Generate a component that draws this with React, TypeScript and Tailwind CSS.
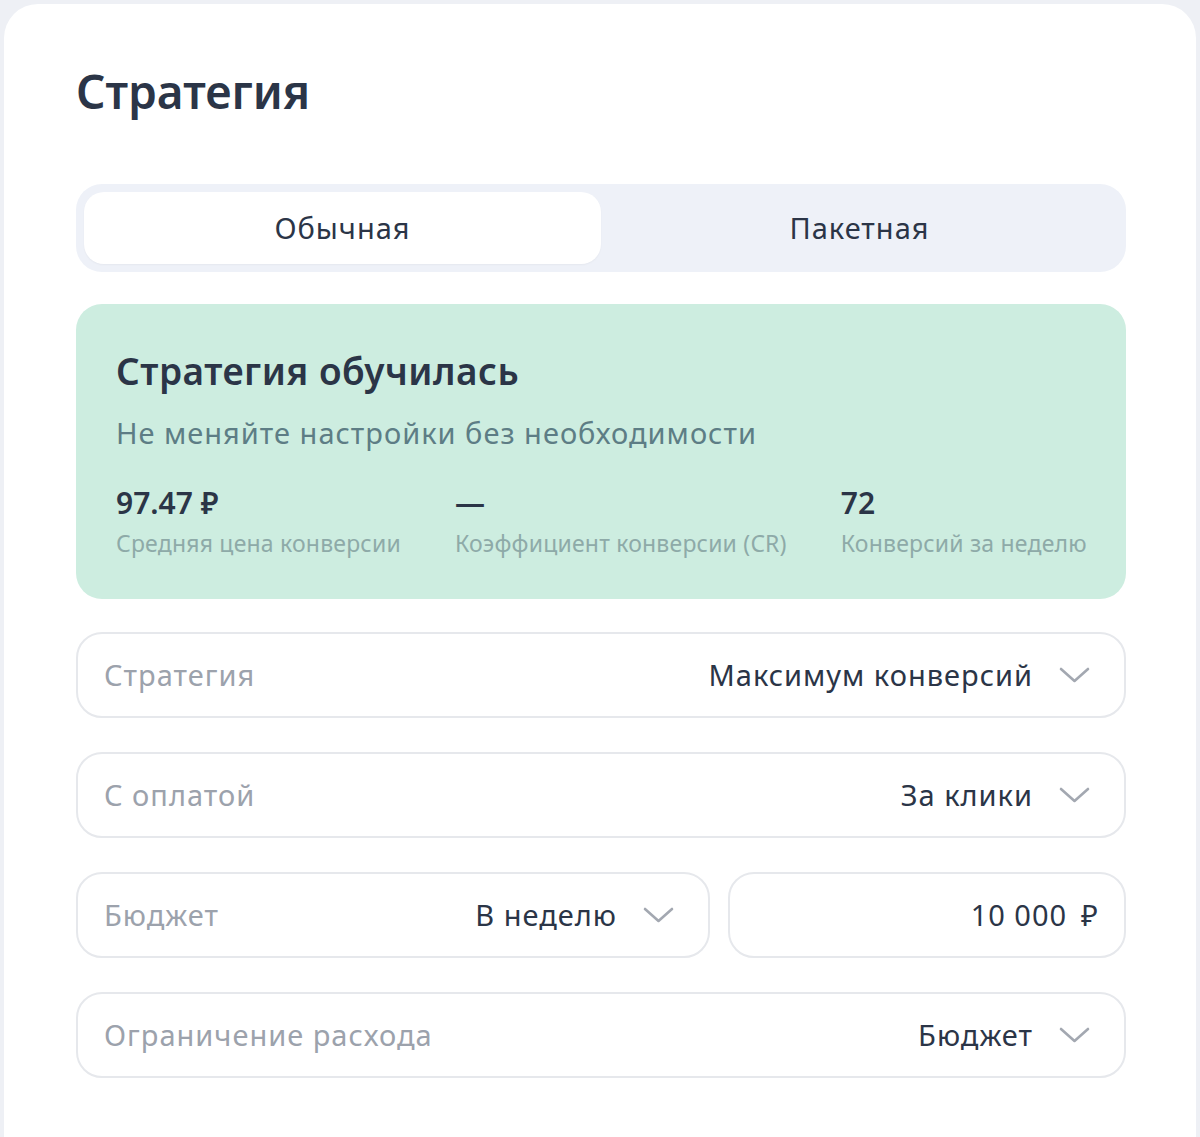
import React from 'react';

const font = { fontFamily: '"Noto Sans", "Open Sans", sans-serif' };

function Chevron() {
    return (
        <svg width="31" height="16" viewBox="0 0 31 16" fill="none" className="shrink-0">
            <polyline points="2,2 15.5,14 29,2" stroke="#a3a8b1" strokeWidth="2.6" strokeLinecap="round" strokeLinejoin="round" />
        </svg>
    );
}

function SelectField({ label, value, className = '' }: { label: string; value: string; className?: string }) {
    return (
        <div className={`flex h-[86px] items-center justify-between rounded-[26px] border-2 border-[#e6e8ec] pl-[26px] pr-[34px] ${className}`}>
            <span className="whitespace-nowrap text-[29px] leading-[36px] tracking-[1px] text-[#9ca2ac]">{label}</span>
            <div className="flex items-center gap-[26px]">
                <span className="whitespace-nowrap text-[29px] leading-[36px] tracking-[1px] text-[#2b3547]">{value}</span>
                <Chevron />
            </div>
        </div>
    );
}

function Stat({ value, label }: { value: string; label: string }) {
    return (
        <div className="flex shrink-0 flex-col">
            <span className="text-[30px] font-semibold leading-[36px] text-[#2b3547]">{value}</span>
            <span className="mt-[7px] whitespace-nowrap text-[23px] leading-[30px] tracking-[0.2px] text-[#8eaaa8]">{label}</span>
        </div>
    );
}

export default function App() {
    return (
        <div className="min-h-screen bg-[#eef0f5] px-1 pt-1" style={font}>
            <div className="flex min-h-[1133px] flex-col rounded-t-[34px] bg-white pl-[72px] pr-[70px] pt-[59px]">
                <h1 className="text-[46px] font-semibold leading-[56px] text-[#2b3547]">Стратегия</h1>

                <div className="mt-[65px] flex h-[88px] rounded-[26px] bg-[#eef1f8] p-2">
                    <div className="flex flex-1 items-center justify-center rounded-[20px] bg-white shadow-[0_1px_2px_rgba(0,0,0,0.04)]">
                        <span className="text-[29px] leading-[36px] tracking-[1px] text-[#2b3547]">Обычная</span>
                    </div>
                    <div className="flex flex-1 items-center justify-center">
                        <span className="text-[29px] leading-[36px] tracking-[1px] text-[#2b3547]">Пакетная</span>
                    </div>
                </div>

                <div className="mt-8 rounded-[26px] bg-[#cdede0] pb-[41px] pl-10 pr-6 pt-[45px]">
                    <h2 className="text-[37px] font-semibold leading-[44px] tracking-[0.5px] text-[#2b3547]">Стратегия обучилась</h2>
                    <p className="mt-[22px] text-[29px] leading-[36px] tracking-[1px] text-[#5d7d85]">Не меняйте настройки без необходимости</p>
                    <div className="mt-[34px] flex gap-[54px]">
                        <Stat value="97.47 ₽" label="Средняя цена конверсии" />
                        <Stat value="—" label="Коэффициент конверсии (CR)" />
                        <Stat value="72" label="Конверсий за неделю" />
                    </div>
                </div>

                <div className="mt-[33px] flex flex-col gap-[34px]">
                    <SelectField label="Стратегия" value="Максимум конверсий" />
                    <SelectField label="С оплатой" value="За клики" />
                    <div className="flex gap-[18px]">
                        <SelectField label="Бюджет" value="В неделю" className="w-[634px]" />
                        <div className="flex h-[86px] flex-1 items-center justify-end rounded-[26px] border-2 border-[#e6e8ec] pr-[26px]">
                            <span className="text-[29px] leading-[36px] tracking-[1px] text-[#2b3547]">10 000</span>
                            <span className="ml-[14px] text-[29px] leading-[36px] text-[#2b3547]">₽</span>
                        </div>
                    </div>
                    <SelectField label="Ограничение расхода" value="Бюджет" />
                </div>
            </div>
        </div>
    );
}
